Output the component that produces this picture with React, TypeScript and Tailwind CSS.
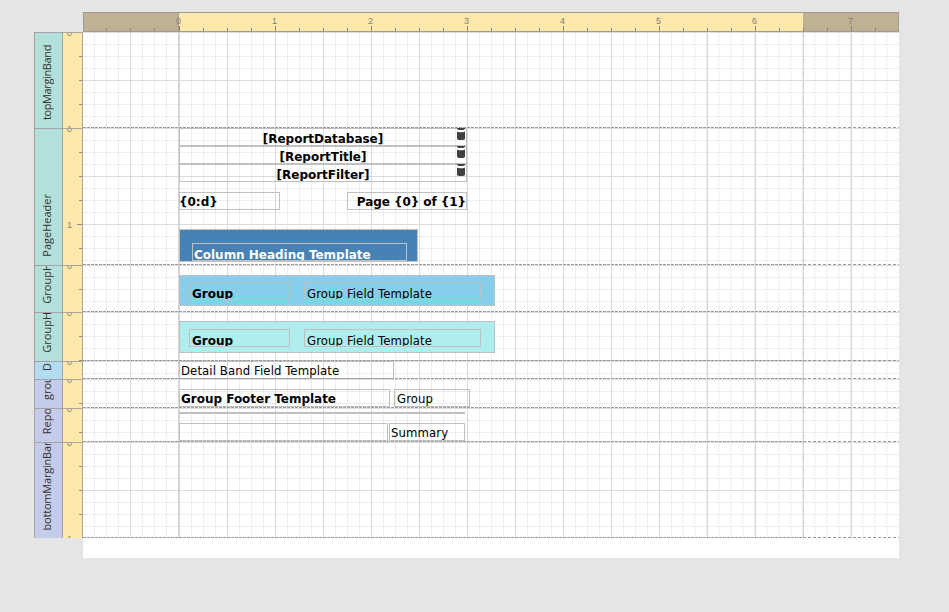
import React from "react";

type Item = {
  left: number;
  top: number;
  width: number;
  height: number;
  text?: string;
  className?: string;
  textClass?: string;
  bound?: boolean;
};

type BandDef = { name: string; height: number; color: string; labelClass?: string; items: Item[] };

const REG = "font-['DejaVu_Sans_Condensed','DejaVu_Sans',sans-serif] text-[13px] tracking-[0.1px]";
const BOLD = "text-[12px] font-bold tracking-[-0.02px]";

const bands: BandDef[] = [
  { name: "topMarginBand", height: 96, color: "bg-[#b4e0da]", labelClass: "tracking-[-0.38px]", items: [] },
  {
    name: "PageHeader",
    height: 137,
    color: "bg-[#b4e0da]",
    items: [
      { left: 96, top: 0, width: 288, height: 18, text: "[ReportDatabase]", className: "justify-center", textClass: `${BOLD} translate-y-px`, bound: true },
      { left: 96, top: 18, width: 288, height: 18, text: "[ReportTitle]", className: "justify-center", textClass: `${BOLD} translate-y-px`, bound: true },
      { left: 96, top: 36, width: 288, height: 18, text: "[ReportFilter]", className: "justify-center", textClass: `${BOLD} translate-y-px`, bound: true },
      { left: 96, top: 64, width: 101, height: 18, text: "{0:d}", textClass: `${BOLD} -ml-px` },
      { left: 264, top: 64, width: 120, height: 18, text: "Page {0} of {1}", className: "justify-end", textClass: "text-[12px] font-bold tracking-[-0.06px]" },
      { left: 96, top: 101, width: 239, height: 33, className: "bg-[#4682b4]" },
      { left: 109, top: 115, width: 215, height: 18, text: "Column Heading Template", className: "pl-px text-white", textClass: `${BOLD} translate-y-[2px]` },
    ],
  },
  {
    name: "GroupHeader2",
    height: 47,
    color: "bg-[#b4e0da]",
    items: [
      { left: 96, top: 10, width: 316, height: 31, className: "bg-[#87ceeb]" },
      { left: 106, top: 17, width: 101, height: 18, text: "Group", className: "pl-[2px]", textClass: `${BOLD} translate-y-[2px]` },
      { left: 221, top: 17, width: 177, height: 18, text: "Group Field Template", className: "pl-[2px]", textClass: `${REG} translate-y-[2px]` },
    ],
  },
  {
    name: "GroupHeader1",
    height: 49,
    color: "bg-[#b4e0da]",
    items: [
      { left: 96, top: 9, width: 316, height: 32, className: "bg-[#afeeee]" },
      { left: 106, top: 17, width: 101, height: 18, text: "Group", className: "pl-[2px]", textClass: `${BOLD} translate-y-[2px]` },
      { left: 221, top: 17, width: 177, height: 18, text: "Group Field Template", className: "pl-[2px]", textClass: `${REG} translate-y-[2px]` },
    ],
  },
  {
    name: "D",
    height: 18,
    color: "bg-[#b4dcf0]",
    items: [{ left: 96, top: 0, width: 215, height: 18, text: "Detail Band Field Template", className: "pl-px", textClass: REG }],
  },
  {
    name: "groupFooter",
    height: 29,
    color: "bg-[#c5cce9]",
    items: [
      { left: 96, top: 10, width: 211, height: 18, text: "Group Footer Template", className: "pl-px", textClass: BOLD },
      { left: 311, top: 10, width: 76, height: 18, text: "Group", className: "pl-[2px]", textClass: REG },
    ],
  },
  {
    name: "ReportFooter",
    height: 34,
    color: "bg-[#c5cce9]",
    items: [
      { left: 96, top: 4, width: 286, height: 2 },
      { left: 96, top: 15, width: 209, height: 18 },
      { left: 306, top: 15, width: 76, height: 18, text: "Summary", className: "pl-px", textClass: REG },
    ],
  },
  { name: "bottomMarginBand", height: 96, color: "bg-[#c5cce9]", labelClass: "tracking-[-0.2px]", items: [] },
];

const SOFT_FROM = 50;

function Grid({ height }: { height: number }) {
  const cols = Array.from({ length: 67 }, (_, i) => i + 1);
  const rows = Array.from({ length: Math.ceil(height / 12) }, (_, i) => i);
  const colX = (i: number) => (i < 8 ? i * 12 - 1 : i >= SOFT_FROM ? i * 12 - 0.5 : i * 12);
  return (
    <svg className="absolute inset-0" width={816} height={height}>
      {cols.map((i) => i % 4 !== 0 && <rect key={i} x={colX(i)} y={0} width={1} height={height} fill="#eeeeee" />)}
      {rows.map((i) => i % 4 !== 0 && <rect key={i} x={0} y={i * 12} width={816} height={1} fill="#eeeeee" />)}
      {rows.map((i) => i % 4 === 0 && <rect key={i} x={0} y={i * 12} width={816} height={1} fill="#dcdcdc" />)}
      {cols.map((i) => i % 4 === 0 && <rect key={i} x={colX(i)} y={0} width={i >= SOFT_FROM ? 1.5 : 1} height={height} fill="#dadada" />)}
      <rect x={95} y={0} width={2} height={height} fill="#d6d6d6" />
      <line x1={720.5} x2={720.5} y1={0} y2={height} stroke="#cccccc" strokeDasharray="5 8" />
    </svg>
  );
}

function ControlBox({ item }: { item: Item }) {
  return (
    <div
      className={`absolute flex items-end overflow-hidden whitespace-nowrap border border-[#c0c0c0] ${item.className ?? ""}`}
      style={{ left: item.left, top: item.top, width: item.width, height: item.height }}
    >
      {item.text && <span className={`leading-[14px] ${item.textClass ?? ""}`}>{item.text}</span>}
    </div>
  );
}

function DatabaseIcon({ item }: { item: Item }) {
  return (
    <svg className="absolute" style={{ left: item.left + item.width - 10, top: item.top }} width={8} height={12} fill="#404040">
      <path d="M0 0h8v1q-1 1-2.500 1h-3Q1 2 0 1z" />
      <path d="M0 3.500q1 .8 2.500 .8h3q1.500 0 2.500-.8V11q-1 1-2.500 1h-3Q1 12 0 11z" />
    </svg>
  );
}

function BandRuler({ height }: { height: number }) {
  const ticks = Array.from({ length: Math.ceil(height / 24) }, (_, i) => i);
  return (
    <div className="relative w-5 shrink-0 overflow-hidden border-r border-t border-[#a8a59c] bg-[#fee8ab]">
      <svg className="absolute -top-px left-0" width={19} height={height}>
        {ticks.map((i) => (
          <rect key={i} x={i % 4 === 0 ? 14 : 16} y={i * 24} width={5} height={1} fill="#8f8d87" />
        ))}
        {[0, 1].map(
          (n) =>
            n * 96 <= height && (
              <text key={n} x={6.5} y={n * 96 + 3.5} textAnchor="middle" fontSize={9} fill="#7d7d7d" fontFamily="Liberation Sans">
                {n}
              </text>
            ),
        )}
      </svg>
    </div>
  );
}

function Band({ band }: { band: BandDef }) {
  return (
    <div className="flex" style={{ height: band.height }}>
      <div className={`flex w-[29px] shrink-0 items-end overflow-hidden border-l border-r border-t border-[#a3a3a8] pb-[8px] pl-[5px] ${band.color}`}>
        <span className={`rotate-180 whitespace-nowrap font-['Open_Sans',sans-serif] text-[11px] leading-[14px] text-[#333] [writing-mode:vertical-rl] ${band.labelClass ?? ""}`}>
          {band.name}
        </span>
      </div>
      <BandRuler height={band.height} />
      <div className="relative w-[816px] shrink-0 bg-white">
        <Grid height={band.height} />
        {band.items.map((item, i) => (
          <ControlBox key={i} item={item} />
        ))}
        {band.items.map((item, i) => item.bound && <DatabaseIcon key={i} item={item} />)}
        <svg className="absolute bottom-0 left-0" width={816} height={1}>
          <line x1={0} x2={720} y1={0.5} y2={0.5} stroke="#9b9b9b" strokeDasharray="3 1" />
          <line x1={720} x2={816} y1={0.5} y2={0.5} stroke="#9b9b9b" strokeDasharray="3 2" />
        </svg>
      </div>
    </div>
  );
}

function TopRuler() {
  return (
    <svg className="ml-[49px] block" width={816} height={20} shapeRendering="crispEdges">
      <rect width={816} height={20} fill="#fee8ab" />
      <rect width={96} height={20} fill="#bfb293" />
      <rect x={720} width={96} height={20} fill="#bfb293" />
      {Array.from({ length: 33 }, (_, i) => i + 1).map((i) => (
        <rect key={i} x={i < 4 ? i * 24 - 1 : i * 24} y={i % 4 === 0 ? 14 : 16} width={1} height={i % 4 === 0 ? 5 : 3} fill="#85827c" />
      ))}
      <rect x={95} y={14} width={2} height={5} fill="#85827c" />
      <rect x={95} y={0} width={1} height={20} fill="#a09887" />
      <rect x={0.5} y={0.5} width={815} height={19} fill="none" stroke="#a19b8d" />
      {Array.from({ length: 8 }, (_, n) => (
        <text key={n} x={95.5 + n * 96} y={12} textAnchor="middle" fontSize={9} fill="#7d7d7d" fontFamily="Liberation Sans">
          {n}
        </text>
      ))}
    </svg>
  );
}

export default function App() {
  return (
    <div className="h-[612px] w-[949px] overflow-hidden bg-[#e5e5e5] pl-[34px] pt-3 font-['DejaVu_Sans',Verdana,sans-serif] text-black">
      <TopRuler />
      {bands.map((b) => (
        <Band key={b.name} band={b} />
      ))}
      <div className="ml-[49px] h-5 w-[816px] bg-white" />
    </div>
  );
}
